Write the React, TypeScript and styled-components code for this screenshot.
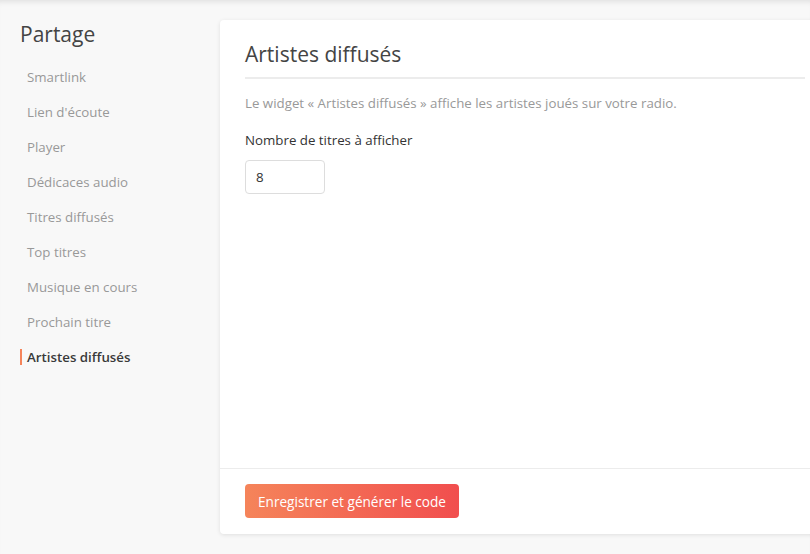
import React from 'react'
import styled, { createGlobalStyle } from 'styled-components'

const GlobalStyle = createGlobalStyle`
  html, body {
    margin: 0;
    padding: 0;
    background: #f8f8f8;
    overflow: hidden;
  }
  body {
    font-family: "Open Sans", "Noto Sans", sans-serif;
    -webkit-font-smoothing: antialiased;
  }
`

const Page = styled.div`
  height: 554px;
  display: flex;
  align-items: flex-start;
  padding: 20px 0;
  box-sizing: border-box;
  box-shadow: inset 0 6px 6px -5px rgba(0, 0, 0, 0.12);
`

const Sidebar = styled.nav`
  width: 220px;
  flex-shrink: 0;
  padding-left: 20px;
  box-sizing: border-box;
`

const SideTitle = styled.h2`
  margin: 0 0 11px;
  font-size: 21px;
  font-weight: 400;
  color: #444;
  line-height: 28px;
`

const NavList = styled.ul`
  list-style: none;
  margin: 0;
  padding: 0;
`

const NavItem = styled.li<{ $active?: boolean }>`
  position: relative;
  height: 35px;
  display: flex;
  align-items: center;
  padding-left: 7px;
  font-size: 13.3px;
  color: ${p => (p.$active ? '#3a3a3a' : '#999')};
  font-weight: ${p => (p.$active ? 600 : 400)};

  &::before {
    content: '';
    display: ${p => (p.$active ? 'block' : 'none')};
    position: absolute;
    left: 0;
    top: 10px;
    width: 2px;
    height: 16px;
    background: #f5845a;
  }
`

const Card = styled.section`
  width: 610px;
  flex-shrink: 0;
  height: 514px;
  background: #fff;
  border-radius: 4px;
  box-shadow: 0 1px 4px rgba(0, 0, 0, 0.1);
  display: flex;
  flex-direction: column;
`

const CardBody = styled.div`
  flex: 1;
  padding: 20px 25px 0;
`

const CardTitle = styled.h1`
  margin: 0;
  padding-bottom: 9px;
  border-bottom: 2px solid #ececec;
  font-size: 21px;
  font-weight: 400;
  color: #444;
  line-height: 28px;
`

const Description = styled.p`
  margin: 15px 0 0;
  font-size: 13.3px;
  color: #999;
  line-height: 18px;
`

const Label = styled.label`
  display: block;
  margin-top: 19px;
  font-size: 13.3px;
  color: #333;
  line-height: 18px;
`

const NumberInput = styled.input`
  display: block;
  margin-top: 11px;
  width: 80px;
  height: 34px;
  box-sizing: border-box;
  border: 1px solid #ddd;
  border-radius: 4px;
  padding: 0 10px;
  font-family: inherit;
  font-size: 13.3px;
  color: #333;
  outline: none;
`

const CardFooter = styled.div`
  border-top: 1px solid #ececec;
  padding: 15px 25px 16px;
`

const PrimaryButton = styled.button`
  display: block;
  height: 34px;
  padding: 0 13px;
  border: none;
  border-radius: 4px;
  background: linear-gradient(90deg, #f5845a 0%, #f14e4e 100%);
  color: #fff;
  font-family: inherit;
  font-size: 13.6px;
  cursor: pointer;
`

const items = [
  'Smartlink',
  "Lien d'écoute",
  'Player',
  'Dédicaces audio',
  'Titres diffusés',
  'Top titres',
  'Musique en cours',
  'Prochain titre',
  'Artistes diffusés',
]

export default function App() {
  return (
    <>
      <GlobalStyle />
      <Page>
        <Sidebar>
          <SideTitle>Partage</SideTitle>
          <NavList>
            {items.map(item => (
              <NavItem key={item} $active={item === 'Artistes diffusés'}>
                {item}
              </NavItem>
            ))}
          </NavList>
        </Sidebar>
        <Card>
          <CardBody>
            <CardTitle>Artistes diffusés</CardTitle>
            <Description>
              Le widget « Artistes diffusés » affiche les artistes joués sur votre radio.
            </Description>
            <Label>Nombre de titres à afficher</Label>
            <NumberInput type="text" defaultValue="8" />
          </CardBody>
          <CardFooter>
            <PrimaryButton>Enregistrer et générer le code</PrimaryButton>
          </CardFooter>
        </Card>
      </Page>
    </>
  )
}
